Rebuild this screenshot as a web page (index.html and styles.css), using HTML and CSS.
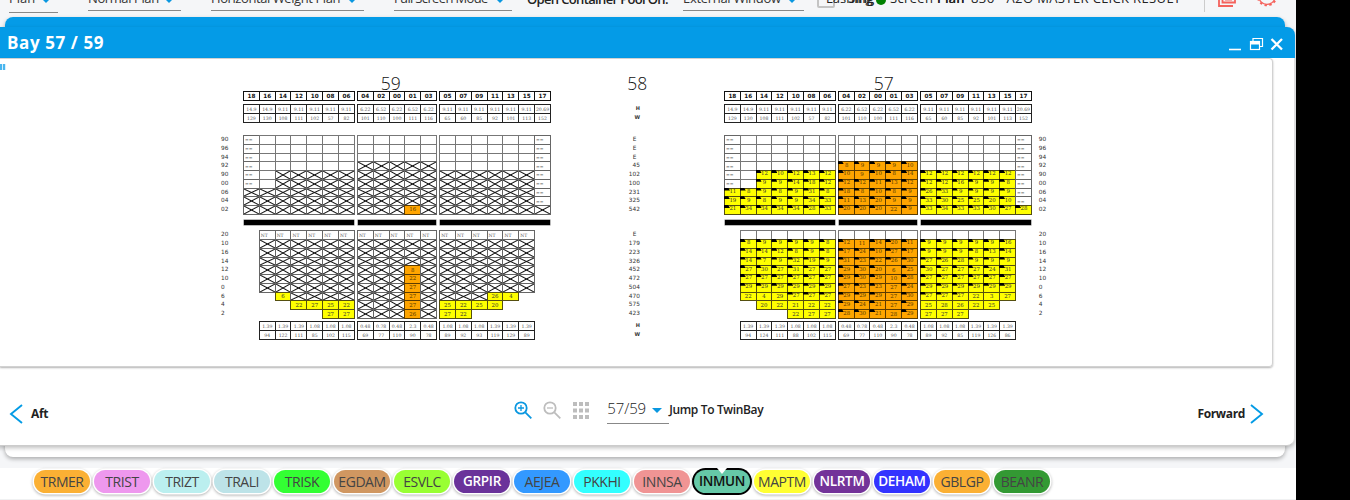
FILE: index.html
```html
<!DOCTYPE html>
<html lang="en">
<head>
<meta charset="utf-8">
<title>Bay 57 / 59</title>
<link rel="stylesheet" href="styles.css">
</head>
<body>
<div class="app">
  <header class="toolbar">
    <div class="select select-low w-plan">Plan<i class="dot"></i></div>
    <div class="select w-normal">Normal Plan<i class="dot"></i></div>
    <div class="select w-weight">Horizontal Weight Plan<i class="dot"></i></div>
    <div class="select w-mode">Full Screen Mode<i class="dot"></i></div>
    <div class="caption">Open Container Pool On:</div>
    <div class="select w-window">External Window<i class="dot"></i></div>
    <div class="checkbox"></div>
    <div class="lashing">Lashing<span class="over over-a">Sing</span></div>
    <div class="status"></div>
    <div class="vessel"><span class="vessel-plan">Screen Plan</span><span class="vessel-name">836 - A2O MASTER CLICK RESULT</span><span class="over over-b">Plan</span></div>
    <div class="divider"></div>
    <svg class="copy" width="18" height="20" viewBox="0 0 18 20" fill="none" stroke="#f4625c" stroke-width="1.8"><path d="M4.500 1h12.500v14.500h-12.500z M1 4v15h14 M7 12.500h7"/></svg>
    <svg class="gear" width="22" height="22" viewBox="0 0 22 22" fill="none" stroke="#f4625c"><circle cx="11" cy="11" r="8.300" stroke-width="1.300"/><circle cx="11" cy="11" r="9.300" stroke-width="2" stroke-dasharray="2.400 2.470"/></svg>
  </header>

  <div class="back-window"><div class="back-head">Ballast Planning</div></div>

  <section class="window">
    <div class="titlebar">
      <h1>Bay 57 / 59</h1>
      <svg width="56" height="16" viewBox="0 0 56 16" fill="none" stroke="#fff">
        <path d="M1 13.500h12" stroke-width="1.600"/>
        <path d="M25 5V2.500h9.500v8h-2.500" stroke-width="1.200"/><rect x="22.500" y="5.500" width="9" height="8" stroke-width="1.200"/><path d="M22 7h10" stroke-width="3"/>
        <path d="M43.500 3l10.500 10.500M54 3L43.500 13.500" stroke-width="2.300"/>
      </svg>
    </div>
    <div class="panel">
      <div class="grip"></div>
      <div class="bay-titles"><span>59</span><span>58</span><span>57</span></div>
      <div class="bays" id="bays"></div>
    </div>
    <footer class="controls">
      <div class="nav"><svg width="14" height="20" viewBox="0 0 14 20" fill="none" stroke="#039be5" stroke-width="1.900"><path d="M13 1L2 10l11 9"/></svg><span>Aft</span></div>
      <div class="tools">
        <svg width="19" height="19" viewBox="0 0 19 19" fill="none" stroke="#0a97e0" stroke-width="1.800"><circle cx="7" cy="7" r="5.700"/><path d="M11.300 11.300l6 6"/><path d="M4 7h6M7 4v6" stroke-width="1.300"/></svg>
        <svg width="19" height="19" viewBox="0 0 19 19" fill="none" stroke="#bdbdbd" stroke-width="1.800"><circle cx="7" cy="7" r="5.700"/><path d="M11.300 11.300l6 6"/><path d="M4 7h6" stroke-width="1.300"/></svg>
        <svg width="16" height="17" viewBox="0 0 16 17" fill="#bdbdbd"><path d="M0 0h4v4h-4zM6 0h4v4h-4zM12 0h4v4h-4zM0 6.500h4v4h-4zM6 6.500h4v4h-4zM12 6.500h4v4h-4zM0 13h4v4h-4zM6 13h4v4h-4zM12 13h4v4h-4z"/></svg>
        <div class="jump-select">57/59<i class="arrow"></i></div>
        <span class="jump">Jump To TwinBay</span>
      </div>
      <div class="nav"><span>Forward</span><svg width="14" height="20" viewBox="0 0 14 20" fill="none" stroke="#039be5" stroke-width="1.900"><path d="M1 1l11 9L1 19"/></svg></div>
    </footer>
  </section>

  <div class="ports">
    <span class="chip orange">TRMER</span><span class="chip violet">TRIST</span><span class="chip pale">TRIZT</span><span class="chip powder">TRALI</span><span class="chip lime">TRISK</span><span class="chip tan">EGDAM</span><span class="chip leaf">ESVLC</span><span class="chip purple">GRPIR</span><span class="chip blue">AEJEA</span><span class="chip cyan">PKKHI</span><span class="chip salmon">INNSA</span><span class="chip teal selected">INMUN</span><span class="chip yellow">MAPTM</span><span class="chip plum">NLRTM</span><span class="chip royal">DEHAM</span><span class="chip orange">GBLGP</span><span class="chip green">BEANR</span>
  </div>
</div>
<script src="bays.js"></script>
</body>
</html>
```
FILE: styles.css
```css
* { box-sizing: border-box; }
body { margin: 0; background: #000; overflow: hidden; font-family: "Open Sans", sans-serif; }
.app { position: relative; width: 1296px; height: 500px; overflow: hidden; background: #f5f6f8; }

/* toolbar */
.toolbar { display: flex; align-items: flex-start; height: 17px; font-size: 13px; line-height: 18px; color: #222; white-space: nowrap; }
.toolbar > * { flex: none; }
.select { position: relative; height: 22px; margin: -11px 30px 0 0; border-bottom: 1px solid #888; color: #333; }
.select-low { height: 24px; }
.dot { position: absolute; right: 8px; top: 10px; border: 4px solid transparent; border-top: 4px solid #0a97e0; border-bottom: 0; }
.w-plan { width: 49px; margin-left: 9px; }
.w-normal { width: 93px; letter-spacing: -.4px; }
.w-weight { width: 153px; letter-spacing: -.42px; }
.w-mode { width: 118px; margin-right: 15px; letter-spacing: -.65px; }
.w-window { width: 121px; margin-right: 13px; letter-spacing: -.3px; }
.caption { width: 156px; margin-top: -10px; font-weight: 600; letter-spacing: -.65px; }
.checkbox { width: 18px; height: 18px; margin-top: -10px; border: 2px solid #c4c4c4; border-radius: 2px; }
.lashing { position: relative; width: 50px; margin: -11px 0 0 -9px; }
.over { position: absolute; font-weight: 600; }
.over-a { left: 22px; top: 0; }
.over-b { left: 47px; top: 0; }
.status { width: 10px; height: 10px; margin-top: -5px; background: #008000; border-radius: 50%; }
.vessel { position: relative; display: flex; width: 313px; margin: -11px 0 0 4px; }
.vessel-plan { width: 81px; letter-spacing: .35px; }
.vessel-name { letter-spacing: .38px; }
.divider { width: 1px; height: 12px; margin-left: 1px; background: #ccc; }
.copy { margin: -13px 0 0 13px; }
.gear { margin: -15px 0 0 20px; }

/* window behind */
.back-window { position: absolute; left: 5px; top: 17px; width: 1280px; height: 440px; overflow: hidden; background: #fff; border-radius: 8px; box-shadow: 0 2px 4px rgba(0,0,0,.3); }
.back-head { height: 40px; padding: 8px 0 0 25px; background: #049be7; color: #fff; font-size: 16px; font-weight: 700; line-height: 20px; }

/* bay window */
.window { position: absolute; left: -10px; top: 27px; width: 1305px; height: 419px; padding-left: 10px; background: #fff; border-radius: 8px; border-bottom: 1px solid #ccc; border-right: 1px solid #ddd; box-shadow: 0 2px 4px rgba(0,0,0,.25); }
.titlebar { display: flex; justify-content: space-between; height: 31px; margin: 0 -1px 0 -10px; padding: 9px 11px 0 17px; background: #049be7; border-radius: 8px 8px 0 0; }
.titlebar h1 { margin: -2px 0 0; color: #fff; font-size: 17px; line-height: 18px; font-weight: 700; letter-spacing: .6px; }
.panel { width: 1273px; height: 309px; border: 1px solid #d2d2d2; border-width: 1px 1px 1px 0; border-radius: 0 4px 4px 0; box-shadow: 0 1px 2px rgba(0,0,0,.3); }
.grip { width: 6px; height: 6px; margin: 5px 0 -11px; background: repeating-linear-gradient(90deg, #49b5ee 0 2px, #d5effc 2px 3px); }
.bay-titles { display: flex; height: 32px; padding: 14px 0 0 267.500px; font: 300 17.500px/20px "Open Sans", sans-serif; color: #111; }
.bay-titles span { width: 246.500px; text-align: center; }

.bays { display: flex; width: 1073px; }
.col, .plan { display: grid; grid-template-rows: 9px 4px 9px 9px 13px repeat(9, 8.760px) 16.500px repeat(10, 8.780px) 3.500px 9px 9px; }
.plan { flex: none; grid-template-columns: repeat(7, 15.840px) 3.100px repeat(5, 15.840px) 3.100px repeat(7, 15.840px); width: 307.750px; }
.col { flex: none; font: 5.800px/9px "DejaVu Sans", sans-serif; color: #333; }
.levels-left { width: 243px; padding-left: 221px; }
.totals { width: 173.200px; padding-right: 84px; text-align: right; }
.totals .shift { padding-right: 3.500px; }
.totals .bold { font-weight: 700; font-size: 5px; }
.levels-right { padding-left: 7px; }

.cell { display: flex; align-items: center; justify-content: center; margin: 0 -1px -1px 0; border: 1px solid #666; font: 5.400px/7px "DejaVu Serif", serif; color: #333; position: relative; white-space: nowrap; }
.head { border-color: #111; font: 700 5.700px/8px "DejaVu Sans", sans-serif; color: #111; }
.info { border-color: #222; font-size: 4.600px; color: #555; }
.none { border-color: #777; }
.note { justify-content: flex-start; padding-left: 1px; font-size: 4.500px; color: #555; }
.cross { border-color: #666; background: linear-gradient(to top right, transparent calc(50% - 1px), #111 50%, transparent calc(50% + 1px)), linear-gradient(to bottom right, transparent calc(50% - 1px), #111 50%, transparent calc(50% + 1px)); }
.hold { background: #ff0; border-color: #554f10; }
.mid { background: #ffa500; border-color: #5d3c00; color: #523800; }
.flag { padding: 0 0 2px 1px; }
.flag::before { content: ""; position: absolute; left: -1px; top: -1px; width: 6px; height: 3px; background: #000; clip-path: polygon(0 0, 70% 0, 100% 100%, 0 100%); }
.bar { align-self: center; height: 5px; margin: 0 0 0 1px; background: #000; box-shadow: 0 0 0 .5px #777; }

/* controls under the bay plan */
.controls { display: flex; justify-content: space-between; height: 78px; padding: 0 30px 0 9px; color: #222; }
.nav { display: flex; height: 20px; margin-top: 37px; gap: 8px; align-items: center; font-size: 12px; line-height: 18px; font-weight: 700; letter-spacing: -.35px; }
.nav:last-child { gap: 5px; }
.tools { display: flex; align-items: flex-start; padding-top: 34px; margin-left: 32px; }
.tools > svg { margin-right: 10px; }
.tools > svg:nth-of-type(3) { margin: 1px 18px 0 1px; }
.jump-select { position: relative; width: 62px; height: 23px; font-size: 15px; font-weight: 300; line-height: 14px; letter-spacing: -.1px; border-bottom: 1px solid #888; color: #222; }
.arrow { position: absolute; right: 7px; top: 7px; border: 5px solid transparent; border-top: 5px solid #0a97e0; border-bottom: 0; }
.jump { font-size: 12px; line-height: 18px; font-weight: 600; letter-spacing: -.35px; white-space: nowrap; }

/* port legend */
.ports { position: absolute; left: 0; top: 468px; width: 1296px; height: 32px; display: flex; gap: 4px; padding: 2px 0 0 34px; background: #fff; border-bottom: 1px solid #f0f1f2; }
.chip { width: 56px; height: 23px; border-radius: 12px; box-shadow: 0 0 0 1.500px #fff, 0 1px 3px 1.500px rgba(0,0,0,.3); text-align: center; font-size: 14px; line-height: 23px; letter-spacing: -.45px; color: #444; }
.orange { background: #fbb034; }
.violet { background: #ee98ee; }
.pale { background: #bbefef; }
.powder { background: #bde3e8; }
.lime { background: #33ff33; }
.tan { background: #d09761; }
.leaf { background: #99ff33; }
.purple { background: #6a329a; color: #fff; }
.blue { background: #3399ff; }
.cyan { background: #33ffff; }
.salmon { background: #f09494; }
.teal { background: #66c9a8; color: #111; }
.yellow { background: #ffff33; }
.plum { background: #733399; color: #fff; }
.royal { background: #3333ff; color: #fff; }
.green { background: #339933; }
.purple, .plum, .royal, .teal { font-weight: 600; font-size: 13.500px; letter-spacing: -.3px; }
.selected { position: relative; box-shadow: 0 0 0 2px #000; }
.selected::before { content: ""; position: absolute; left: 23px; top: -2px; border: 5px solid transparent; border-top: 6px solid #fff; border-bottom: 0; }
```
FILE: bays.js
```js
// Slot codes: "_" no slot, "." empty, "w" blocked, "n" label NT, "x" crossed,
// a number is a weight, a trailing "-" leaves out the corner flag.
const header = "18 16 14 12 10 08 06|04 02 00 01 03|05 07 09 11 13 15 17";
const info = [
  "14.9 14.9 9.11 9.11 9.11 9.11 9.11|6.22 6.52 6.22 6.52 6.22|9.11 9.11 9.11 9.11 9.11 9.11 20.69",
  "129 130 108 111 102 57 82|101 110 100 111 116|65 60 85 92 101 113 152"
];
const open = "w . . . . . .|. . . . .|. . . . . . w";
const hx = "_ x x x x x x|x x x x x|x x x x x x _";
const hs = "_ 1.39 1.39 1.39 1.08 1.08 1.08|0.48 0.78 0.48 2.3 0.48|1.08 1.08 1.08 1.39 1.39 1.39 _";

const bay59 = {
  deck: [open, open, open,
    "w . . . . . .|x x x x x|. . . . . . w",
    "w . x x x x x|x x x x x|x x x x x x w",
    "w . x x x x x|x x x x x|x x x x x x w",
    "x x x x x x x|x x x x x|x x x x x x w",
    "x x x x x x x|x x x x x|x x x x x x w",
    "x x x x x x x|x x x 16- x|x x x x x x x"],
  hold: ["_ n n n n n n|n n n n n|n n n n n n _", hx, hx, hx,
    "_ x x x x x x|x x x 8- x|x x x x x x _",
    "_ x x x x x x|x x x 22- x|x x x x x x _",
    "_ x x x x x x|x x x 27- x|x x x x x x _",
    "_ _ 6- x x x x|x x x 27- x|x x x 26- 4- _ _",
    "_ _ _ 22- 27- 25- 22-|x x x 27- x|25- 22- 25- 20- _ _ _",
    "_ _ _ _ _ 27- 27-|x x x 26- x|27- 22- _ _ _ _ _"],
  foot: [hs, "_ 94 122 111 85 102 115|69 77 110 90 78|89 92 93 119 129 89 _"]
};
const bay57 = {
  deck: [open, open, open,
    "w . . . . . .|8 9 9 9 10|. . . . . . w",
    "w . 12 10 12 13 12|10 9- 10 8 14|12 12 12 12 12 12 w",
    "w . 9 9 14 18 12|12 12 11 13 12|12 12 16 9 9 8 w",
    "11 8 9 8 9 31 8|18 8 10 8 9|26 33 9 9 9 9 w",
    "19 9 8 9 9 34 33|11 13 20 9 9|33 30 25 25 20 10 w",
    "21 34 34 34 34 28 33|20 20 20 22- 9|33 34 33 33 30 27 28"],
  hold: ["_ . . . . . .|. . . . .|. . . . . . _",
    "_ 8 9 9 9 9 8|12 11- 14 20 11|9 9 9 9 9 16 _",
    "_ 14 14 12 8 9 8|17 24 10 27 17|9 9 9 8 13 14 _",
    "_ 14 7 9 32 19 9|31 23 22 26 30|27 26 28 9 9 9 _",
    "_ 27 30 27 31 27 27|29 30 20 6- 25|30 27 27 27 24 31 _",
    "_ 27 27 27 27 27 27|29 30 29 10- 28|27 27 27 27 27 27 _",
    "_ 29 29 29 29 29 29|27 23 23 27- 24|29 29 29 29 29 29 _",
    "_ 22- 4- 29- 27 27 27|29 29 29 27- 30|27 27 27 22- 3- 27- _",
    "_ _ 20- 22- 21- 22- 22-|29 24 21 27- 29|25- 28- 26- 22- 25- _ _",
    "_ _ _ _ 22- 27- 27-|28 30 21 28- 29|27- 27- 27- _ _ _ _"],
  foot: [hs, "_ 94 124 111 88 102 115|69 77 110 90 78|89 92 85 119 126 86 _"]
};

const starts = [1, 9, 15];
const root = document.getElementById("bays");

function put(parent, cls, text, row, col) {
  const el = document.createElement("div");
  el.className = cls;
  el.textContent = text;
  el.style.gridRow = row;
  if (col) el.style.gridColumn = col;
  parent.append(el);
}

function addRow(plan, line, row, kind) {
  line.split("|").forEach((part, s) => part.split(" ").forEach((code, i) => {
    if (code === "_") return;
    let cls = "cell ", text = "";
    if (kind) { cls += kind; text = code; }
    else if (code === ".") cls += "none";
    else if (code === "w") { cls += "note"; text = "=="; }
    else if (code === "n") { cls += "note"; text = "NT"; }
    else if (code === "x") cls += "cross";
    else {
      cls += (s === 1 ? "mid" : "hold") + (code.endsWith("-") ? "" : " flag");
      text = code.replace("-", "");
    }
    put(plan, cls, text, row, starts[s] + i);
  }));
}

function addPlan(bay) {
  const plan = document.createElement("div");
  plan.className = "plan";
  addRow(plan, header, 1, "head");
  info.forEach((line, i) => addRow(plan, line, 3 + i, "info"));
  bay.deck.forEach((line, i) => addRow(plan, line, 6 + i));
  ["1 / 8", "9 / 14", "15 / 22"].forEach(c => put(plan, "bar", "", 15, c));
  bay.hold.forEach((line, i) => addRow(plan, line, 16 + i));
  bay.foot.forEach((line, i) => addRow(plan, line, 27 + i, "info"));
  root.append(plan);
}

function addLabels(cls, deck, hold, weights) {
  const col = document.createElement("div");
  col.className = "col " + cls;
  const label = (t, row) => put(col, t === "E" ? "shift" : "", t, row, 1);
  deck.split(" ").forEach((t, i) => label(t, 6 + i));
  hold.split(" ").forEach((t, i) => label(t, 16 + i));
  if (weights) [["H", 3], ["W", 4], ["H", 27], ["W", 28]].forEach(([t, r]) => put(col, "bold", t, r, 1));
  root.append(col);
}

const deckLevels = "90 96 94 92 90 00 06 04 02";
const holdLevels = "20 10 16 14 12 10 0 6 4 2";
addLabels("levels-left", deckLevels, holdLevels);
addPlan(bay59);
addLabels("totals", "E E E 45 102 100 231 325 542", "E 179 223 326 452 472 504 470 575 423", true);
addPlan(bay57);
addLabels("levels-right", deckLevels, holdLevels);
```
